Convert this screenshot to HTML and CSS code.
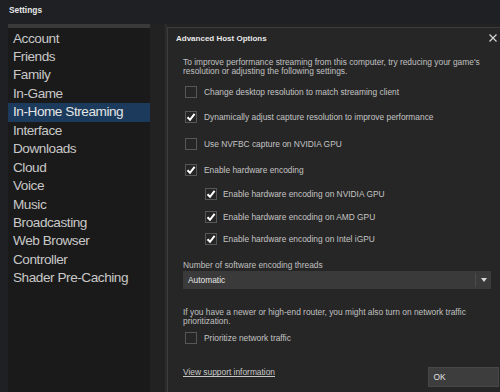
FILE: index.html
```html
<!DOCTYPE html>
<html lang="en">
<head>
    <meta charset="UTF-8">
    <title>Settings</title>
    <link rel="stylesheet" href="styles.css">
</head>
<body>

    <div class="titlebar">Settings</div>

    <div class="window">
        <!-- Settings categories -->
        <ul class="nav">
            <li>Account</li>
            <li>Friends</li>
            <li>Family</li>
            <li>In-Game</li>
            <li class="active">In-Home Streaming</li>
            <li>Interface</li>
            <li>Downloads</li>
            <li>Cloud</li>
            <li>Voice</li>
            <li>Music</li>
            <li>Broadcasting</li>
            <li>Web Browser</li>
            <li>Controller</li>
            <li>Shader Pre-Caching</li>
        </ul>

        <!-- Page behind the dialog -->
        <div class="main">
            <div class="track"></div>
        </div>
    </div>

    <!-- Advanced host options dialog -->
    <div class="modal">
        <div class="modal-head">
            <span class="modal-title">Advanced Host Options</span>
            <svg class="close" width="8" height="8" viewBox="0 0 8 8">
                <path d="M0.5 0.5 L7.5 7.5 M7.5 0.5 L0.5 7.5" stroke="#d6d6d6" stroke-width="1.2" fill="none"/>
            </svg>
        </div>

        <div class="modal-body">
            <p class="text intro">To improve performance streaming from this computer, try reducing your game's resolution or adjusting the following settings.</p>

            <div class="check row1"><span class="box"></span><span>Change desktop resolution to match streaming client</span></div>
            <div class="check row2"><span class="box"><svg width="10" height="10" viewBox="0 0 10 10"><path d="M1.5 5.2 L4 7.8 L8.6 1.8" stroke="#fff" stroke-width="2" fill="none"/></svg></span><span>Dynamically adjust capture resolution to improve performance</span></div>
            <div class="check row3"><span class="box"></span><span>Use NVFBC capture on NVIDIA GPU</span></div>
            <div class="check row4"><span class="box"><svg width="10" height="10" viewBox="0 0 10 10"><path d="M1.5 5.2 L4 7.8 L8.6 1.8" stroke="#fff" stroke-width="2" fill="none"/></svg></span><span>Enable hardware encoding</span></div>
            <div class="check sub sub1"><span class="box"><svg width="10" height="10" viewBox="0 0 10 10"><path d="M1.5 5.2 L4 7.8 L8.6 1.8" stroke="#fff" stroke-width="2" fill="none"/></svg></span><span>Enable hardware encoding on NVIDIA GPU</span></div>
            <div class="check sub sub2"><span class="box"><svg width="10" height="10" viewBox="0 0 10 10"><path d="M1.5 5.2 L4 7.8 L8.6 1.8" stroke="#fff" stroke-width="2" fill="none"/></svg></span><span>Enable hardware encoding on AMD GPU</span></div>
            <div class="check sub sub3"><span class="box"><svg width="10" height="10" viewBox="0 0 10 10"><path d="M1.5 5.2 L4 7.8 L8.6 1.8" stroke="#fff" stroke-width="2" fill="none"/></svg></span><span>Enable hardware encoding on Intel iGPU</span></div>

            <p class="text threads-label">Number of software encoding threads</p>
            <div class="select">
                <span class="select-value">Automatic</span>
                <span class="select-arrow">
                    <svg width="6" height="4" viewBox="0 0 6 4"><path d="M0 0 L6 0 L3 4 Z" fill="#d8d8d8"/></svg>
                </span>
            </div>

            <p class="text router">If you have a newer or high-end router, you might also turn on network traffic prioritization.</p>
            <div class="check prio"><span class="box"></span><span>Prioritize network traffic</span></div>

            <div class="modal-foot">
                <a href="#" class="support">View support information</a>
                <button class="ok-btn">OK</button>
            </div>
        </div>
    </div>

</body>
</html>
```

FILE: styles.css
```css
/* Base */
html, body {
    margin: 0;
    padding: 0;
    width: 500px;
    height: 392px;
    overflow: hidden;
    background-color: #1f2023;
    font-family: 'Liberation Sans', Arial, sans-serif;
}

.titlebar {
    height: 24px;
    line-height: 21px;
    padding-left: 9px;
    font-size: 8.4px;
    font-weight: bold;
    color: #e6e6e6;
}

.window {
    display: flex;
    height: 368px;
}

/* Sidebar */
.nav {
    list-style: none;
    margin: 0 0 0 8px;
    padding: 1.5px 0 0 0;
    width: 142px;
    background-color: #1a1a1a;
    border-top: 4px solid #3a3a3a;
}
.nav li {
    line-height: 18.46px;
    padding-left: 5px;
    font-size: 13.6px;
    letter-spacing: -0.45px;
    color: #c8c8c8;
    white-space: nowrap;
}
.nav li.active {
    background-color: #1b3a5c;
    color: #e4e4e4;
}

/* Page under the dialog */
.main {
    flex: 1;
    background-color: #222222;
    padding-left: 15px;
}
.track {
    width: 2px;
    height: 100%;
    background-color: #2c2c2c;
}

/* Dialog */
.modal {
    position: absolute;
    left: 167px;
    top: 27px;
    right: 0;
    bottom: 0;
    background-color: #262626;
    border-top: 1px solid #3c3c3c;
    border-left: 1px solid #3c3c3c;
}
.modal-head {
    display: flex;
    align-items: center;
    justify-content: space-between;
    height: 20px;
    padding: 0 3px 0 8px;
}
.modal-title {
    font-size: 8px;
    font-weight: bold;
    color: #e8e8e8;
}
.modal-body {
    padding: 0 9px 0 15px;
}

.text {
    margin: 0;
    font-size: 8.4px;
    line-height: 9px;
    color: #c0c0c0;
}
.intro {
    margin-top: 9.5px;
}

/* Checkbox rows */
.check {
    display: flex;
    align-items: center;
    gap: 7px;
    height: 12px;
    margin-left: 2px;
    font-size: 8.4px;
    color: #c4c4c4;
    white-space: nowrap;
}
.box {
    box-sizing: border-box;
    width: 12px;
    height: 12px;
    border: 1px solid #575757;
    display: flex;
    align-items: center;
    justify-content: center;
}
.sub {
    margin-left: 22px;
    gap: 6px;
}
.row1 { margin-top: 10.5px; }
.row2 { margin-top: 13px; }
.row3 { margin-top: 15px; }
.row4 { margin-top: 14px; }
.sub1 { margin-top: 12px; }
.sub2 { margin-top: 11px; }
.sub3 { margin-top: 10px; }

/* Thread count dropdown */
.threads-label {
    margin-top: 15.5px;
}
.select {
    display: flex;
    align-items: center;
    justify-content: space-between;
    height: 18px;
    margin-top: 1.5px;
    background-color: #3a3a3a;
}
.select-value {
    padding-left: 5px;
    font-size: 8.4px;
    color: #e6e6e6;
}
.select-arrow {
    display: flex;
    align-items: center;
    justify-content: center;
    width: 15px;
    height: 14px;
    border-left: 1px solid #4a4a4a;
}

.router {
    margin-top: 18.8px;
}
.prio {
    margin-top: 6px;
}

/* Footer */
.modal-foot {
    display: flex;
    align-items: flex-start;
    justify-content: space-between;
    margin-top: 23.6px;
}
.support {
    font-size: 8.4px;
    line-height: 10px;
    color: #c8c8c8;
    text-decoration: underline;
}
.ok-btn {
    width: 71px;
    height: 19.5px;
    margin-right: -7.5px;
    padding: 0 0 0 5px;
    text-align: left;
    font-family: 'Liberation Sans', Arial, sans-serif;
    font-size: 8.4px;
    color: #e0e0e0;
    background-color: #3d3d3d;
    border: 1px solid #474747;
    border-radius: 0;
}
```
